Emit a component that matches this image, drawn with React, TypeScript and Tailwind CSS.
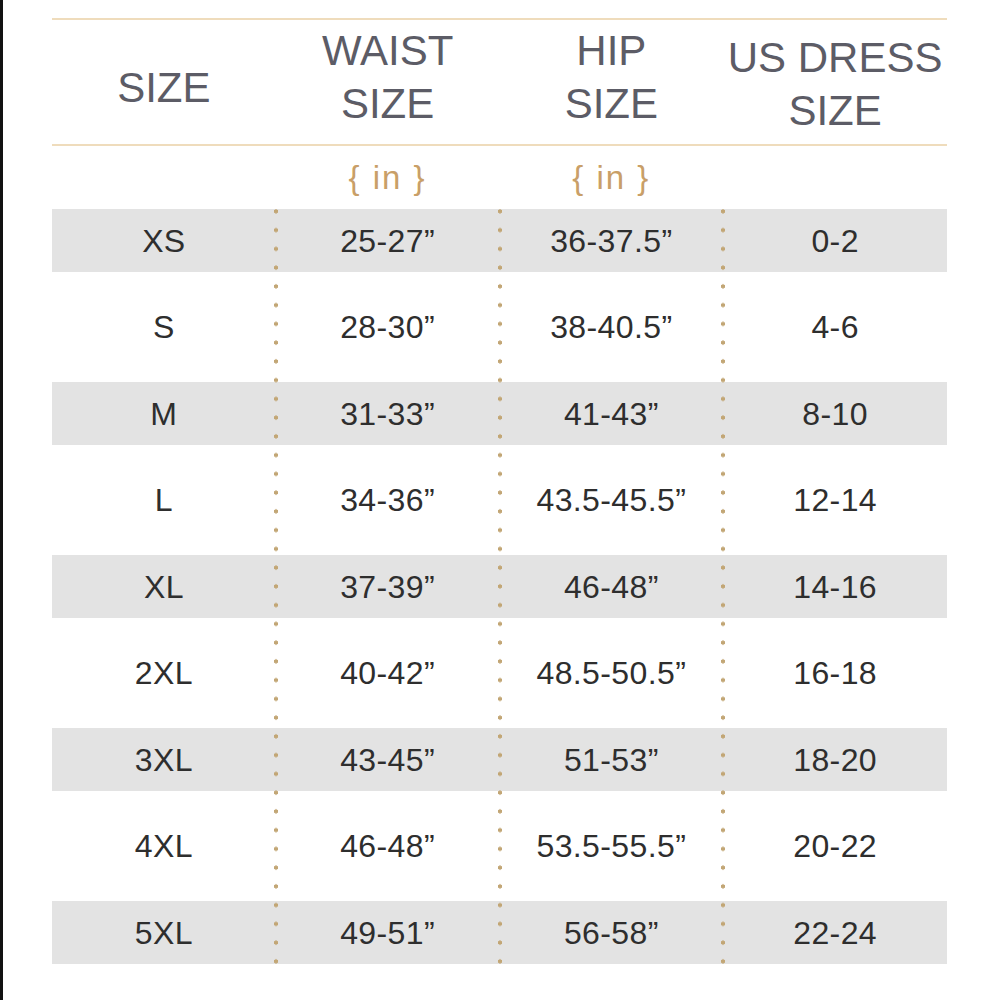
const rows = [
  { size: 'XS', waist: '25-27”', hip: '36-37.5”', dress: '0-2' },
  { size: 'S', waist: '28-30”', hip: '38-40.5”', dress: '4-6' },
  { size: 'M', waist: '31-33”', hip: '41-43”', dress: '8-10' },
  { size: 'L', waist: '34-36”', hip: '43.5-45.5”', dress: '12-14' },
  { size: 'XL', waist: '37-39”', hip: '46-48”', dress: '14-16' },
  { size: '2XL', waist: '40-42”', hip: '48.5-50.5”', dress: '16-18' },
  { size: '3XL', waist: '43-45”', hip: '51-53”', dress: '18-20' },
  { size: '4XL', waist: '46-48”', hip: '53.5-55.5”', dress: '20-22' },
  { size: '5XL', waist: '49-51”', hip: '56-58”', dress: '22-24' },
];

// dotted column divider, drawn as a repeating radial gradient down the column's left edge
const dots =
  'bg-[radial-gradient(circle,#c2a675_1.8px,transparent_2.4px)] bg-[length:8px_18.75px] bg-repeat-y bg-[position:0px_-7px]';

export default function App() {
  return (
    <div className="h-[1000px] w-full bg-white border-l-[3px] border-[#111] font-['Liberation_Sans',Arial,sans-serif]">
      <div className="ml-[49px] w-[895px] pt-[18px]">
        <div className="h-[2px] bg-[#efdcbc]" />

        {/* header */}
        <div className="grid grid-cols-4 h-[124px] text-[42px] leading-[53px] text-[#5c5c66] text-center">
          <div className="pt-[41px]">SIZE</div>
          <div className="pt-[4px]">
            <div>WAIST</div>
            <div>SIZE</div>
          </div>
          <div className="pt-[4px]">
            <div>HIP</div>
            <div>SIZE</div>
          </div>
          <div className="pt-[11px]">
            <div>US DRESS</div>
            <div>SIZE</div>
          </div>
        </div>

        <div className="h-[2px] bg-[#efdcbc]" />

        {/* units */}
        <div className="grid grid-cols-4 h-[63px] items-center text-center text-[33px] tracking-[2px] text-[#c99f68]">
          <div />
          <div>{'{ in }'}</div>
          <div>{'{ in }'}</div>
          <div />
        </div>

        {/* body */}
        <div className="relative">
          {rows.map((r, i) => (
            <div
              key={r.size}
              className={
                i % 2 === 0
                  ? 'grid grid-cols-4 h-[63px] items-center text-center bg-[#e3e3e3] text-[32px] tracking-[0.4px] text-[#2e2e2e]'
                  : 'grid grid-cols-4 h-[110px] items-center text-center text-[32px] tracking-[0.4px] text-[#2e2e2e]'
              }
            >
              <div>{r.size}</div>
              <div>{r.waist}</div>
              <div>{r.hip}</div>
              <div>{r.dress}</div>
            </div>
          ))}
          <div className="absolute inset-y-0 left-[-4px] right-[4px] grid grid-cols-4 pointer-events-none">
            <div />
            <div className={dots} />
            <div className={dots} />
            <div className={dots} />
          </div>
        </div>
      </div>
    </div>
  );
}
